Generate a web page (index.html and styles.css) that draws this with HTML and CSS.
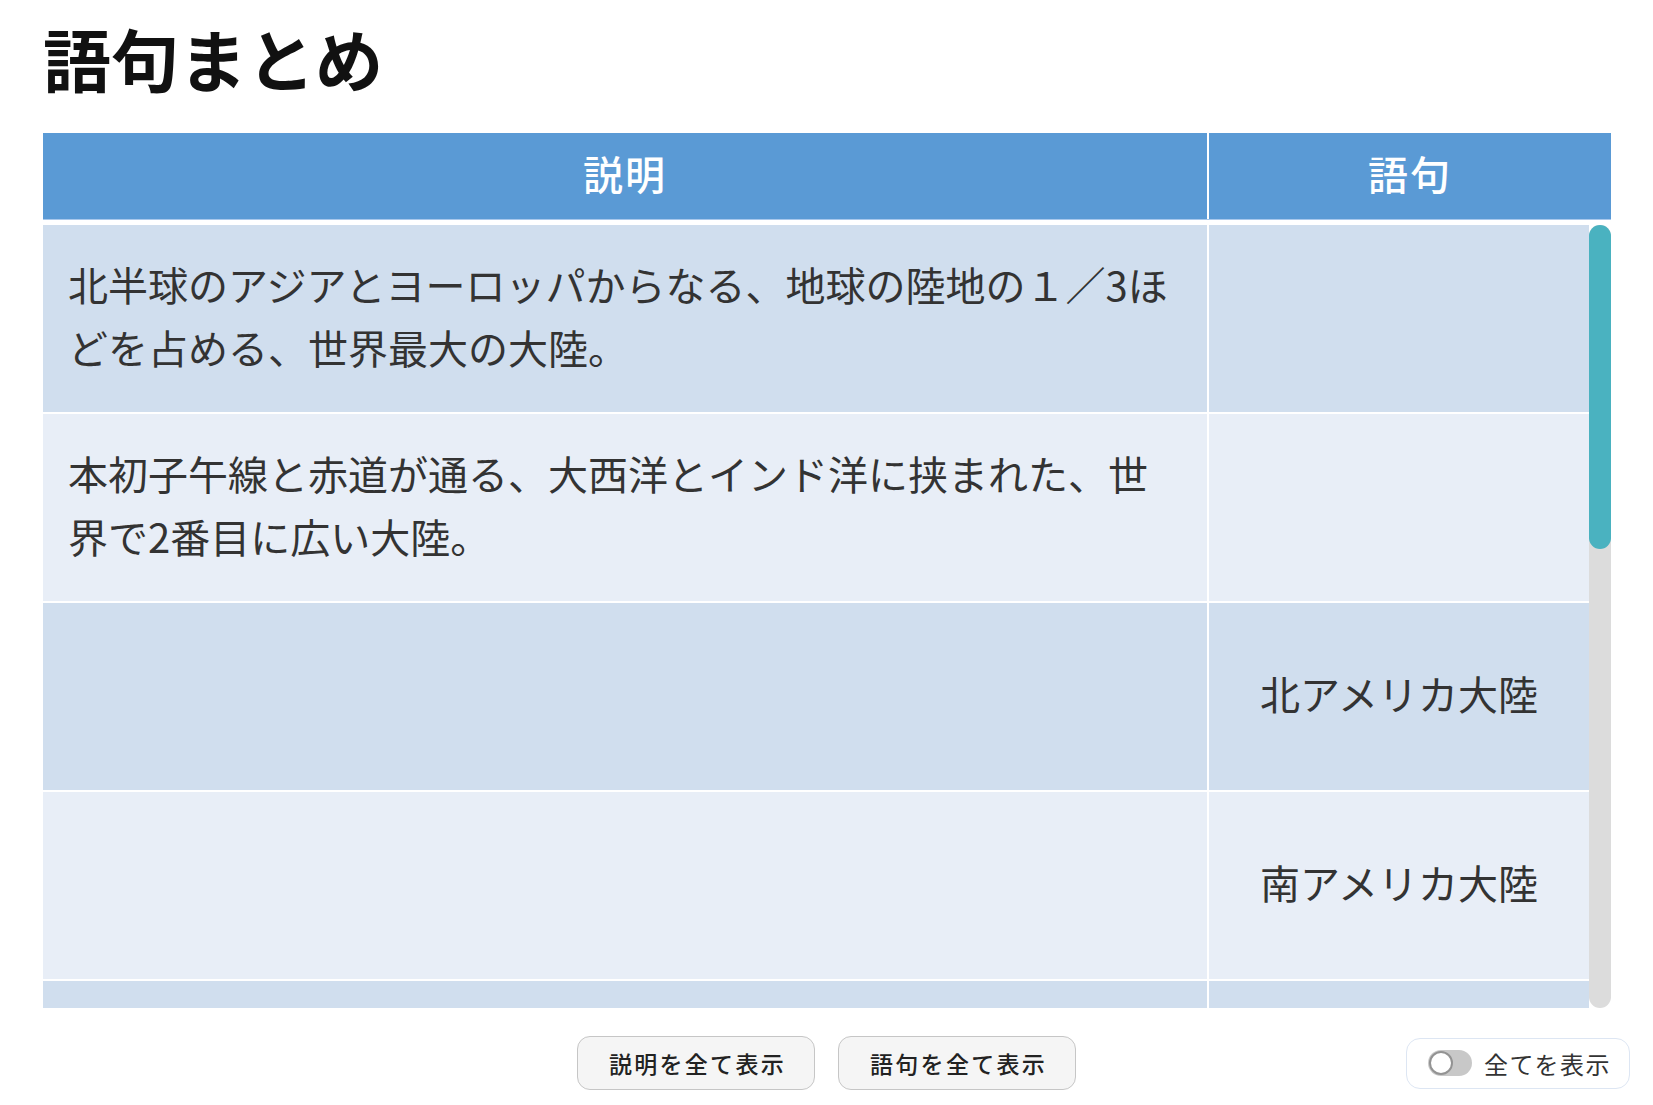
FILE: index.html
```html
<!DOCTYPE html>
<html lang="ja">
<head>
<meta charset="utf-8">
<title>語句まとめ</title>
<link rel="stylesheet" href="styles.css">
</head>
<body>
<div class="page">
  <h1 class="title">語句まとめ</h1>
  <div class="table">
    <div class="thead">
      <div class="th th-desc">説明</div>
      <div class="th th-term">語句</div>
    </div>
    <div class="tbody-wrap">
      <div class="tbody">
        <div class="row odd"><div class="cell desc">北半球のアジアとヨーロッパからなる、地球の陸地の１／3ほどを占める、世界最大の大陸。</div><div class="cell term"></div></div>
        <div class="row even"><div class="cell desc">本初子午線と赤道が通る、大西洋とインド洋に挟まれた、世界で2番目に広い大陸。</div><div class="cell term"></div></div>
        <div class="row odd"><div class="cell desc"></div><div class="cell term">北アメリカ大陸</div></div>
        <div class="row even"><div class="cell desc"></div><div class="cell term">南アメリカ大陸</div></div>
        <div class="row odd"><div class="cell desc"></div><div class="cell term"></div></div>
        <div class="row even"><div class="cell desc"></div><div class="cell term"></div></div>
        <div class="row odd"><div class="cell desc"></div><div class="cell term"></div></div>
        <div class="row even"><div class="cell desc"></div><div class="cell term"></div></div>
        <div class="row odd"><div class="cell desc"></div><div class="cell term"></div></div>
        <div class="row even"><div class="cell desc"></div><div class="cell term"></div></div>
      </div>
      <div class="scrollbar"><div class="thumb"></div></div>
    </div>
  </div>
</div>
<div class="footer">
  <div class="spacer"></div>
  <div class="buttons">
    <button class="btn">説明を全て表示</button>
    <button class="btn">語句を全て表示</button>
  </div>
  <label class="toggle-box">
    <span class="switch"><span class="knob"></span></span>
    <span class="toggle-label">全てを表示</span>
  </label>
</div>
</body>
</html>
```

FILE: styles.css
```css
html, body {
  margin: 0;
  padding: 0;
  background: #ffffff;
}

body {
  font-family: "Noto Sans CJK JP", "Noto Sans", sans-serif;
  color: #333333;
}

.page {
  padding: 24px 42px 0 43px;
}

.title {
  margin: 0 0 41px;
  font-size: 68px;
  line-height: 68px;
  font-weight: 700;
  color: #111111;
}

.thead {
  display: grid;
  grid-template-columns: 1166px 1fr;
  height: 86px;
  background: #5a9ad5;
  border-bottom: 1px solid #a8c8ec;
  margin-bottom: 5px;
}

.th {
  display: flex;
  align-items: center;
  justify-content: center;
  padding-bottom: 7px;
  color: #ffffff;
  font-size: 40px;
  font-weight: 500;
  letter-spacing: 2px;
}

.th-desc {
  border-right: 2px solid #ffffff;
  box-sizing: border-box;
}

.tbody-wrap {
  display: flex;
  height: 783px;
}

.tbody {
  flex: 1;
  overflow: hidden;
}

.scrollbar {
  width: 22px;
  flex: none;
  background: #dcdcdc;
  border-radius: 11px;
}

.thumb {
  height: 324px;
  background: #4ab2c0;
  border-radius: 11px;
}

.row {
  display: grid;
  grid-template-columns: 1166px 1fr;
  height: 189px;
  box-sizing: border-box;
  border-bottom: 2px solid #ffffff;
}

.odd {
  background: #d0deee;
}

.even {
  background: #e8eef7;
}

.cell {
  display: flex;
  align-items: center;
  padding: 0 25px;
  font-size: 40px;
  line-height: 63px;
  color: #333333;
}

.desc {
  border-right: 2px solid #ffffff;
  box-sizing: border-box;
  padding-bottom: 6px;
}

.term {
  justify-content: center;
  text-align: center;
  padding: 0 10px 6px;
}

.footer {
  display: grid;
  grid-template-columns: 1fr auto 1fr;
  align-items: center;
  padding: 28px 23px 0;
}

.buttons {
  display: flex;
  gap: 23px;
}

.btn {
  height: 54px;
  padding: 0 28px 0 31px;
  border: 1px solid #c6c6c6;
  border-radius: 13px;
  background: #f5f5f5;
  font-family: "Noto Sans CJK JP", sans-serif;
  font-size: 23px;
  font-weight: 500;
  letter-spacing: 2.3px;
  color: #222222;
}

.toggle-box {
  justify-self: end;
  display: flex;
  align-items: center;
  gap: 12px;
  box-sizing: border-box;
  height: 51px;
  padding: 0 18px 0 21px;
  border: 1px solid #dde6f3;
  border-radius: 14px;
  white-space: nowrap;
}

.switch {
  position: relative;
  width: 44px;
  height: 26px;
  border-radius: 13px;
  background: #c8c8c8;
  flex: none;
}

.knob {
  position: absolute;
  left: 1px;
  top: 1px;
  width: 24px;
  height: 24px;
  box-sizing: border-box;
  border-radius: 50%;
  background: #ffffff;
  border: 2px solid #939393;
}

.toggle-label {
  font-size: 24px;
  letter-spacing: 1.5px;
  color: #333333;
}
```
